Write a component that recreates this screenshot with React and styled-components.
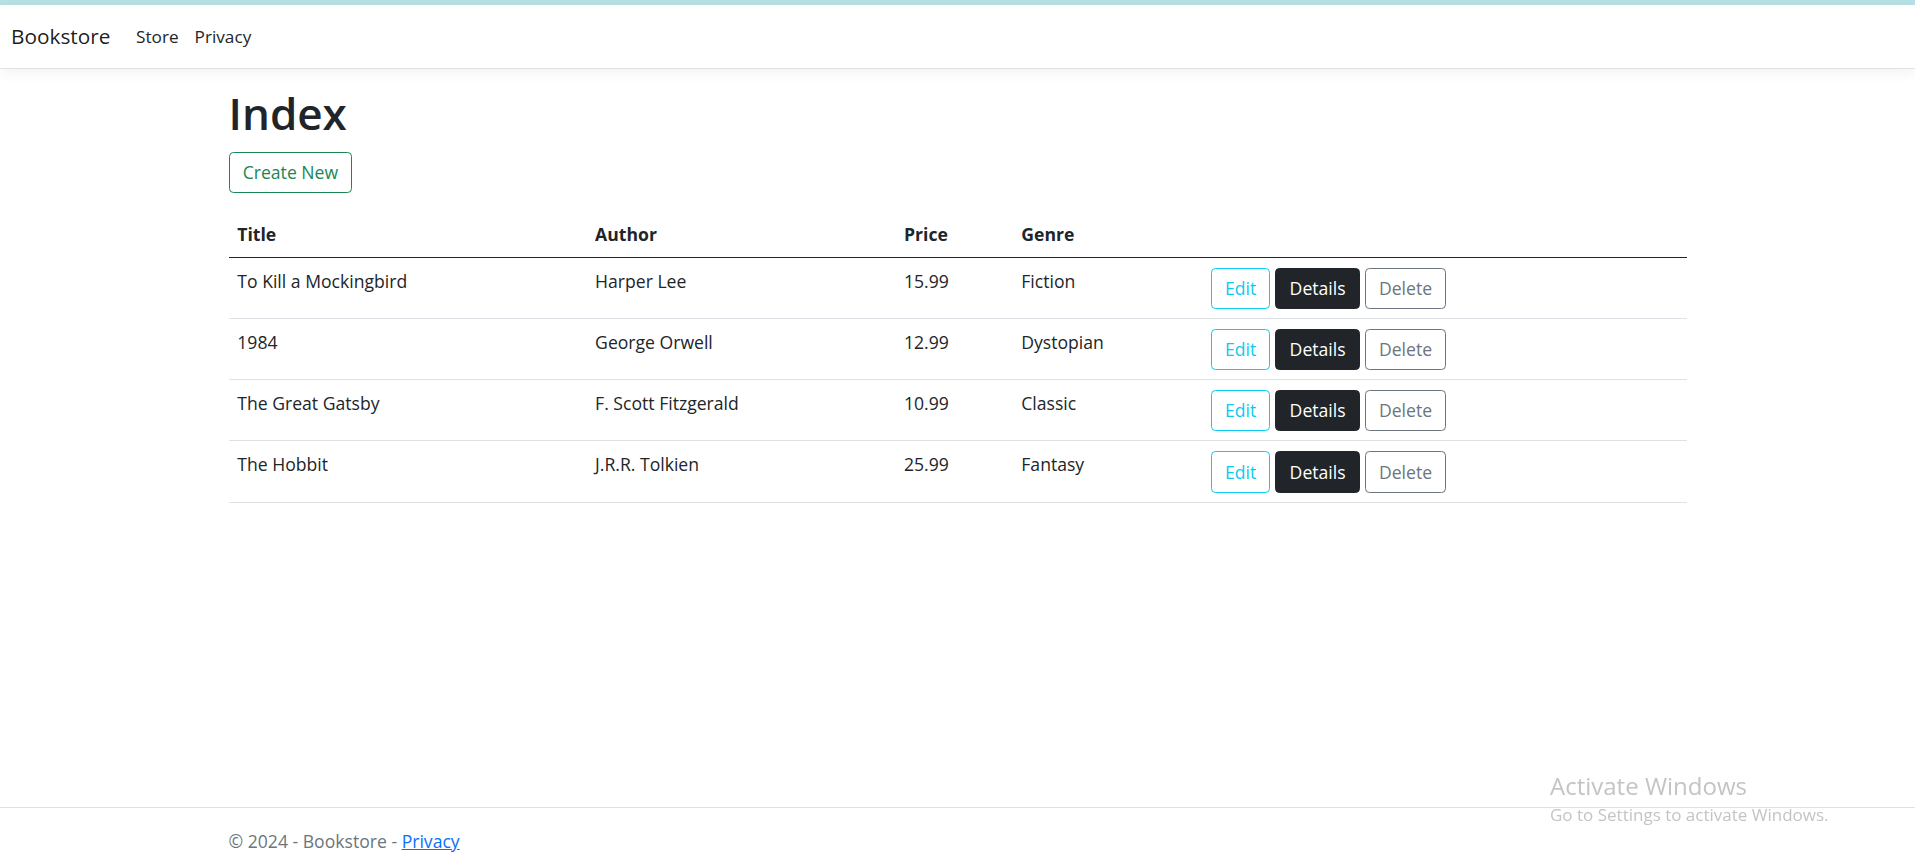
import React from 'react'
import styled, { createGlobalStyle, css } from 'styled-components'

const GlobalStyle = createGlobalStyle`
    html, body {
        margin: 0;
        padding: 0;
    }
    body {
        font-family: "Segoe UI", "Open Sans", "Noto Sans", sans-serif;
        font-size: 17.6px;
        line-height: 1.5;
        color: #212529;
        background: #fff;
    }
    * {
        box-sizing: border-box;
    }
`

const Page = styled.div`
    min-height: 100vh;
    display: flex;
    flex-direction: column;
`

const TopBand = styled.div`
    height: 5px;
    background: #b6e0e4;
`

const Navbar = styled.nav`
    display: flex;
    align-items: center;
    padding: 9.5px 11px;
    background: #fff;
    border-bottom: 1px solid #dee2e6;
    box-shadow: 0 4.4px 13.2px rgba(0, 0, 0, 0.05);
    margin-bottom: 17.6px;
`

const Brand = styled.a`
    font-size: 20.8px;
    line-height: 33px;
    padding: 5.5px 0;
    margin-right: 17.6px;
    color: rgba(0, 0, 0, 0.9);
    text-decoration: none;
`

const NavList = styled.ul`
    display: flex;
    list-style: none;
    margin: 0;
    padding: 0;
`

const NavLink = styled.a`
    display: block;
    padding: 8.8px 8px;
    font-size: 17.2px;
    color: #212529;
    text-decoration: none;
`

const Main = styled.main`
    width: 1458px;
    margin: 0 auto;
    padding-bottom: 17.6px;
`

const Heading = styled.h1`
    font-size: 44px;
    font-weight: 600;
    line-height: 1.2;
    margin: 0 0 12px;
    padding-top: 0.5px;
`

const Para = styled.p`
    margin: 0 0 18.5px;
`

const variants = {
    success: css`
        color: #198754;
        border-color: #198754;
        background: transparent;
    `,
    info: css`
        color: #0dcaf0;
        border-color: #0dcaf0;
        background: transparent;
    `,
    dark: css`
        color: #fff;
        border-color: #212529;
        background: #212529;
    `,
    secondary: css`
        color: #6c757d;
        border-color: #6c757d;
        background: transparent;
    `,
}

const Button = styled.a`
    display: inline-block;
    font-size: 17.6px;
    line-height: 1.5;
    padding: 6.6px 13.2px;
    border: 1.1px solid transparent;
    border-radius: 4.4px;
    text-decoration: none;
    vertical-align: middle;
    cursor: pointer;
    ${({ variant }) => variants[variant]}
`

const Table = styled.table`
    width: 100%;
    border-collapse: collapse;
    table-layout: fixed;
    vertical-align: top;
    margin-bottom: 17.6px;
`

const Col = styled.col`
    width: ${({ w }) => w};
`

const Th = styled.th`
    text-align: left;
    font-weight: 700;
    padding: 9px 8.8px 9.6px;
    border-bottom: 1.4px solid #212529;
`

const Td = styled.td`
    padding: 9.6px 8.8px 9px;
    border-bottom: 1px solid #dee2e6;
    vertical-align: top;
`

const Actions = styled.div`
    display: flex;
    gap: 5px;
`

const Footer = styled.footer`
    margin-top: auto;
    height: 61px;
    overflow: hidden;
    border-top: 1px solid #dee2e6;
    line-height: 66px;
    color: #6c757d;
    white-space: nowrap;
`

const FooterInner = styled.div`
    width: 1458px;
    margin: 0 auto;
`

const FooterLink = styled.a`
    color: #0d6efd;
    text-decoration: underline;
`

const Watermark = styled.div`
    position: fixed;
    left: 1550px;
    top: 772px;
    color: #c4c4c4;
    pointer-events: none;
`

const WatermarkTitle = styled.div`
    font-size: 24px;
    line-height: 1.2;
`

const WatermarkText = styled.div`
    font-size: 17px;
    line-height: 1.2;
    margin-top: 4.5px;
`

const books = [
    { title: 'To Kill a Mockingbird', author: 'Harper Lee', price: '15.99', genre: 'Fiction' },
    { title: '1984', author: 'George Orwell', price: '12.99', genre: 'Dystopian' },
    { title: 'The Great Gatsby', author: 'F. Scott Fitzgerald', price: '10.99', genre: 'Classic' },
    { title: 'The Hobbit', author: 'J.R.R. Tolkien', price: '25.99', genre: 'Fantasy' },
]

const App = () => {
    return (
        <Page>
            <GlobalStyle />
            <TopBand />
            <Navbar>
                <Brand href="#">Bookstore</Brand>
                <NavList>
                    <li><NavLink href="#">Store</NavLink></li>
                    <li><NavLink href="#">Privacy</NavLink></li>
                </NavList>
            </Navbar>
            <Main>
                <Heading>Index</Heading>
                <Para>
                    <Button variant="success" href="#">Create New</Button>
                </Para>
                <Table>
                    <colgroup>
                        <Col w="357.8px" />
                        <Col w="308.9px" />
                        <Col w="117.3px" />
                        <Col w="189.5px" />
                        <Col w="auto" />
                    </colgroup>
                    <thead>
                        <tr>
                            <Th>Title</Th>
                            <Th>Author</Th>
                            <Th>Price</Th>
                            <Th>Genre</Th>
                            <Th></Th>
                        </tr>
                    </thead>
                    <tbody>
                        {books.map(book => (
                            <tr key={book.title}>
                                <Td>{book.title}</Td>
                                <Td>{book.author}</Td>
                                <Td>{book.price}</Td>
                                <Td>{book.genre}</Td>
                                <Td>
                                    <Actions>
                                        <Button variant="info" href="#">Edit</Button>
                                        <Button variant="dark" href="#">Details</Button>
                                        <Button variant="secondary" href="#">Delete</Button>
                                    </Actions>
                                </Td>
                            </tr>
                        ))}
                    </tbody>
                </Table>
            </Main>
            <Footer>
                <FooterInner>
                    &copy; 2024 - Bookstore - <FooterLink href="#">Privacy</FooterLink>
                </FooterInner>
            </Footer>
            <Watermark>
                <WatermarkTitle>Activate Windows</WatermarkTitle>
                <WatermarkText>Go to Settings to activate Windows.</WatermarkText>
            </Watermark>
        </Page>
    )
}

export default App
